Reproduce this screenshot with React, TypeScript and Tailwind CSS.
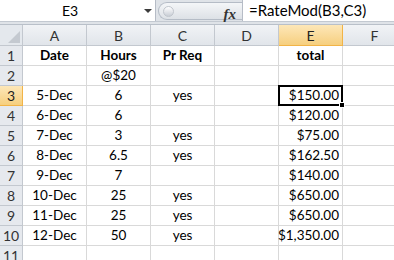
import React from "react";

const cols = ["A", "B", "C", "D", "E", "F"];

type Row = { n: number; a?: string; b?: string; c?: string; e?: string; bold?: boolean };

const rows: Row[] = [
  { n: 1, a: "Date", b: "Hours", c: "Pr Req", e: "total", bold: true },
  { n: 2, b: "@$20" },
  { n: 3, a: "5-Dec", b: "6", c: "yes", e: "$150.00" },
  { n: 4, a: "6-Dec", b: "6", e: "$120.00" },
  { n: 5, a: "7-Dec", b: "3", c: "yes", e: "$75.00" },
  { n: 6, a: "8-Dec", b: "6.5", c: "yes", e: "$162.50" },
  { n: 7, a: "9-Dec", b: "7", e: "$140.00" },
  { n: 8, a: "10-Dec", b: "25", c: "yes", e: "$650.00" },
  { n: 9, a: "11-Dec", b: "25", c: "yes", e: "$650.00" },
  { n: 10, a: "12-Dec", b: "50", c: "yes", e: "$1,350.00" },
  { n: 11 },
];

const font = { fontFamily: "Lato, 'Open Sans', sans-serif" };

function Cell({ children, align = "center", bold }: { children?: React.ReactNode; align?: "center" | "right"; bold?: boolean }) {
  return (
    <div
      className={`h-[20px] border-r border-b border-[#d9d9d9] flex items-end pb-[1px] text-[13.5px] leading-[17px] text-black ${
        align === "right" ? "justify-end pr-[3px]" : "justify-center"
      } ${bold ? "font-bold" : ""}`}
    >
      {children}
    </div>
  );
}

export default function App() {
  return (
    <div className="w-[394px] h-[260px] overflow-hidden bg-white" style={font}>
      {/* formula bar */}
      <div className="flex h-[22px] bg-[#dfe3e8] border-b border-[#c3c9d1]">
        <div className="relative w-[156px] bg-white border-r border-[#b6bcc6] flex items-center">
          <span className="w-[140px] text-center text-[14px] text-black">E3</span>
          <span className="absolute left-[144px] top-[9px] w-0 h-0 border-l-[4px] border-r-[4px] border-t-[4px] border-l-transparent border-r-transparent border-t-[#3c3c3c]" />
        </div>
        <div className="w-[2px]" />
        <div className="relative flex items-center w-[84px] mt-[2px] mb-[1px] rounded-l-full border border-r-0 border-[#b5bcc6] bg-gradient-to-b from-[#f4f6f8] to-[#dde1e6]">
          <span className="ml-[4px] w-[11px] h-[11px] rounded-full bg-gradient-to-b from-[#ffffff] to-[#c9ced6] border border-[#c0c5cc]" />
          <span
            className="absolute right-[6px] top-[0px] text-[15px] italic font-bold text-[#333]"
            style={{ fontFamily: "'Liberation Serif', serif" }}
          >
            fx
          </span>
        </div>
        <div className="flex-1 bg-white border-l border-[#b6bcc6] flex items-center pl-[6px] text-[15px] text-black">
          =RateMod(B3,C3)
        </div>
      </div>
      <div className="h-[3px] bg-[#dfe3e8] border-b border-[#b9c0c9]" />

      {/* grid */}
      <div className="grid grid-cols-[23px_64px_64px_64px_64px_64px_64px] w-[407px]">
        {/* corner */}
        <div className="relative h-[21px] bg-[#e4e8ed] border-r border-b border-[#c3c8cf]">
          <svg className="absolute right-[2px] bottom-[2px]" width="12" height="12" viewBox="0 0 12 12">
            <polygon points="12,0 12,12 0,12" fill="#c4c9d0" />
          </svg>
        </div>
        {cols.map((c) => (
          <div
            key={c}
            className={`h-[21px] flex items-center justify-center text-[14px] border-r border-b ${
              c === "E"
                ? "bg-gradient-to-b from-[#fde7b8] to-[#f6cf7e] border-[#f2b447] text-[#222]"
                : "bg-gradient-to-b from-[#f1f3f6] to-[#e1e5ea] border-[#c3c8cf] text-[#333]"
            }`}
          >
            {c}
          </div>
        ))}

        {rows.map((r) => (
          <React.Fragment key={r.n}>
            <div
              className={`h-[20px] flex items-end pb-[1px] justify-center text-[14px] leading-[17px] border-r border-b ${
                r.n === 3
                  ? "bg-gradient-to-b from-[#fde7b8] to-[#f6cf7e] border-[#f2b447] text-[#222]"
                  : "bg-[#e6e9ee] border-[#c3c8cf] text-[#333]"
              }`}
            >
              {r.n}
            </div>
            <Cell bold={r.bold}>{r.a}</Cell>
            <Cell bold={r.bold}>{r.b}</Cell>
            <Cell bold={r.bold}>{r.c}</Cell>
            <Cell />
            {r.n === 3 ? (
              <div className="relative h-[20px] border-r border-b border-[#d9d9d9]">
                <div className="absolute -left-[1px] -top-[1px] w-[65px] h-[21px] border-2 border-black flex items-end justify-end pr-[2px] pb-[0px] text-[13.5px] leading-[17px] text-black">
                  $150.00
                </div>
                <span className="absolute -right-[3px] -bottom-[3px] w-[6px] h-[6px] bg-black border border-white" />
              </div>
            ) : (
              <Cell align={r.bold ? "center" : "right"} bold={r.bold}>
                {r.e}
              </Cell>
            )}
            <Cell />
          </React.Fragment>
        ))}
      </div>
    </div>
  );
}
